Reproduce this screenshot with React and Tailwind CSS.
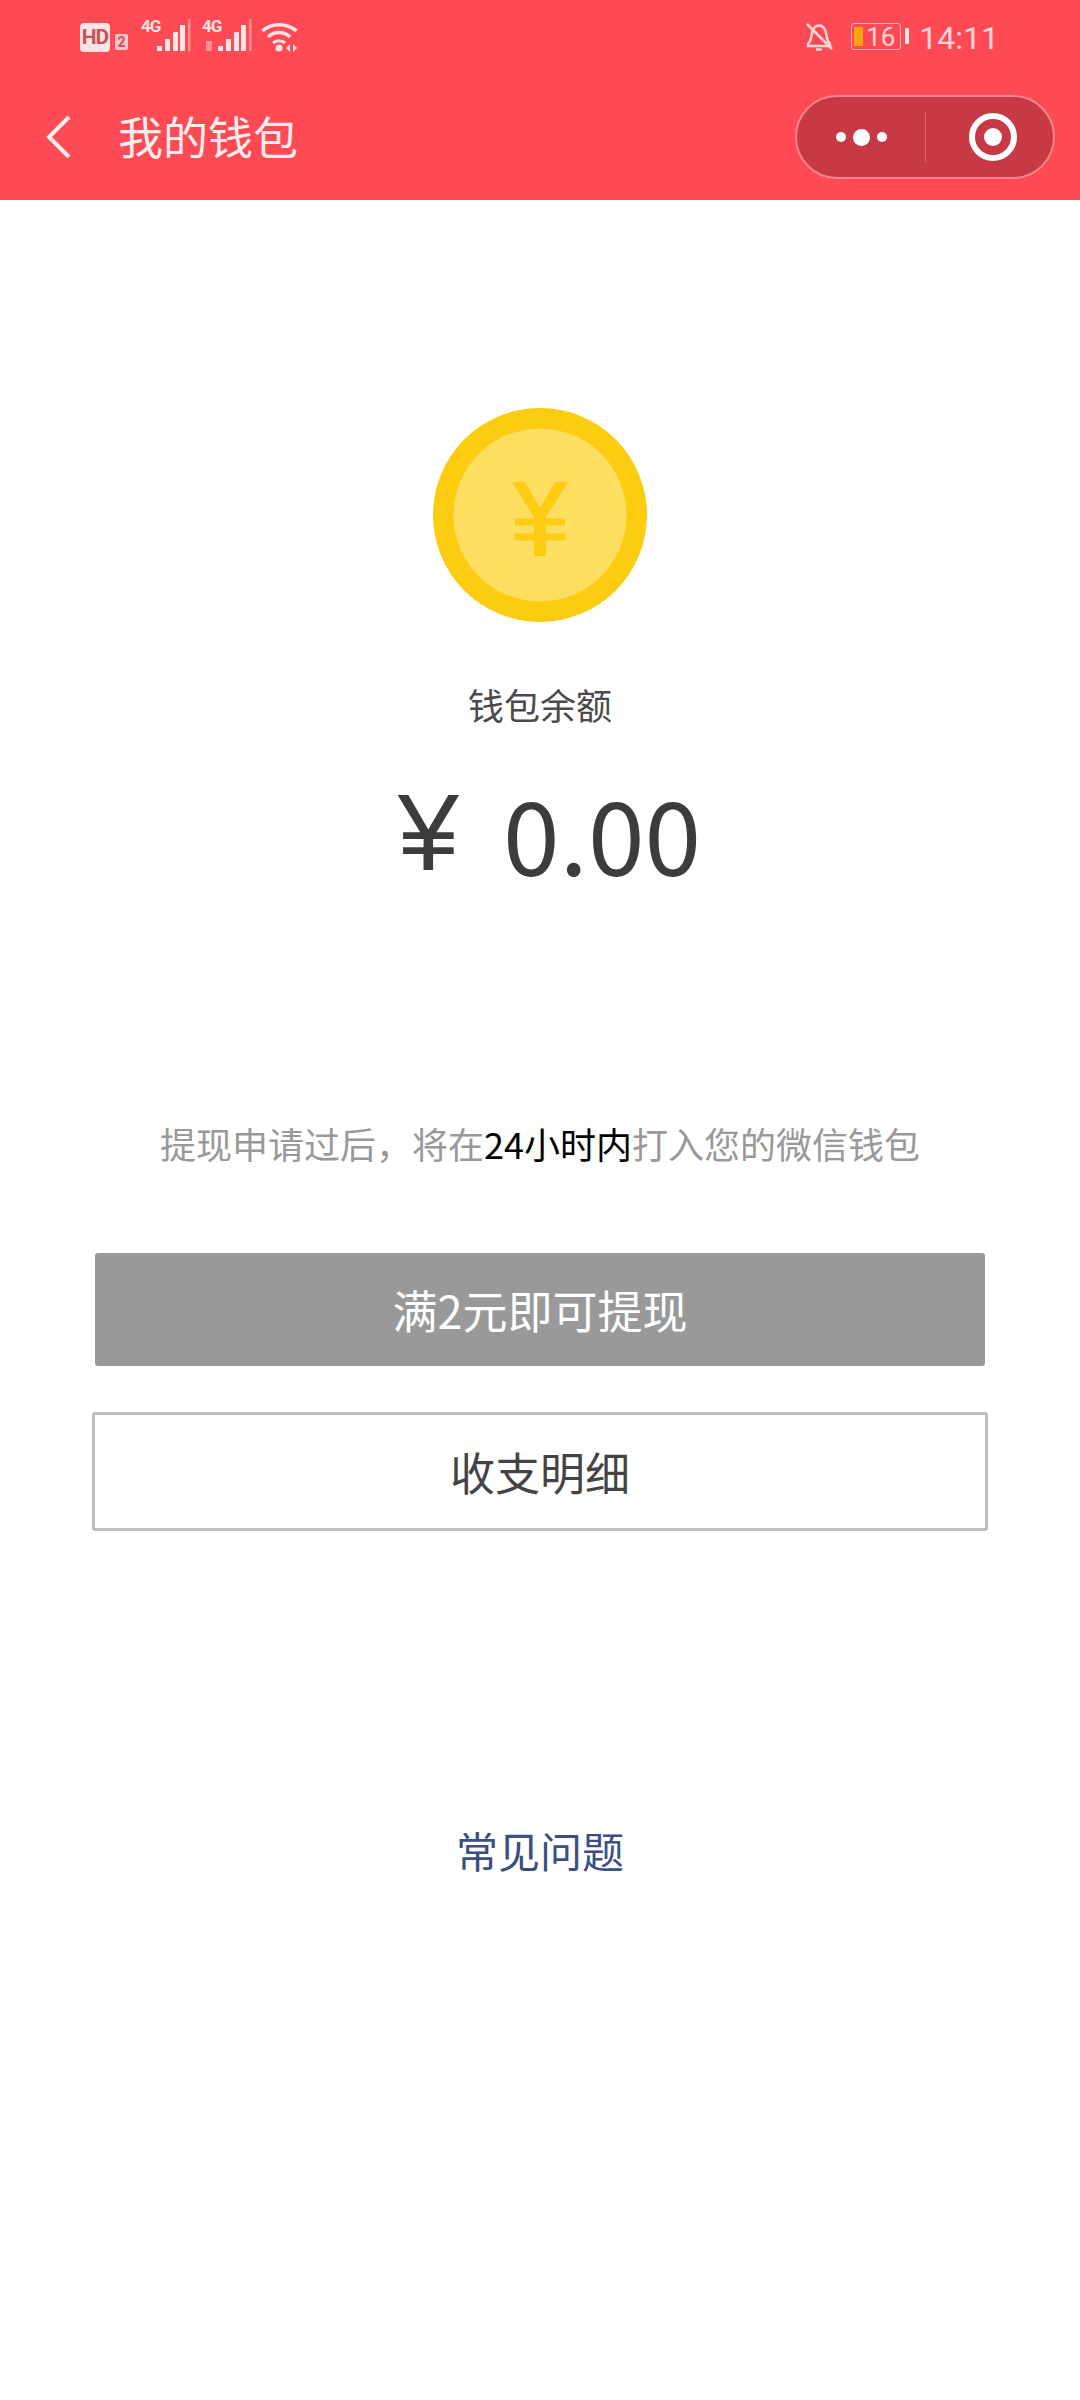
import React from "react";

const CJK = "font-['Noto_Sans_CJK_SC','Noto_Sans',sans-serif]";

function Signal({ sub }) {
  return (
    <div className="flex items-start">
      <div className="w-[16px] flex flex-col">
        <span className="text-[17px] leading-[15px] font-bold tracking-[-1px] whitespace-nowrap text-[#fde4e4] font-['Roboto',sans-serif]">
          4G
        </span>
        {sub && <div className="mt-[7px] ml-[4px] w-[6px] h-[10px] bg-[#fb8f95]" />}
      </div>
      <svg width="36" height="34" viewBox="16 0 36 34" className="block">
        <rect x="16" y="27" width="5" height="5" fill="#fde4e4" />
        <rect x="24" y="20" width="5" height="12" fill="#fde4e4" />
        <rect x="32" y="13" width="5" height="19" fill="#fde4e4" />
        <rect x="39" y="6" width="5" height="26" fill="#fde4e4" />
        <rect x="47" y="0" width="2.500" height="32" fill="#fb8a90" />
      </svg>
    </div>
  );
}

function Wifi() {
  return (
    <svg width="37" height="30" viewBox="0 0 37 30" fill="none" className="block">
      <path d="M1.500 9C10 0.500 26 0.500 35.500 9" stroke="#fde4e4" strokeWidth="3.500" />
      <path d="M7 15C13 9 23 9 29 15" stroke="#fde4e4" strokeWidth="3.500" />
      <path d="M12 21C15.500 18 20.500 18 24 21" stroke="#fde4e4" strokeWidth="3" />
      <circle cx="18" cy="26" r="3.500" fill="#fde4e4" />
      <path d="M29 22V30L25 26Z M32 22V30L36 26Z" fill="#fde4e4" />
    </svg>
  );
}

function BellOff() {
  return (
    <svg width="28" height="30" viewBox="0 0 28 30" fill="none" stroke="#fbd5d6" strokeWidth="2.500" className="block">
      <path d="M3 22C6 19 6 16 7 11C8 6 11 3.500 14 3.500C17 3.500 20 6 21 11C22 16 22 19 25 22V24H3Z" />
      <path d="M11 27.500H17" />
      <path d="M2 2L27 27" />
    </svg>
  );
}

export default function App() {
  return (
    <div className={`${CJK} w-[1080px] h-[2400px] bg-white flex flex-col items-center`}>
      <header className="w-full h-[200px] bg-[#fe4a55] flex flex-col shrink-0">
        {/* status bar */}
        <div className="h-[95px] flex justify-between pt-[19px] pl-[80px] pr-[81px]">
          <div className="flex items-start">
            <div className="mt-[4px] w-[30px] h-[29px] rounded-[4px] bg-[#fde4e4] flex items-center justify-center text-[21px] leading-none font-bold tracking-[-1px] text-[#c9505b] font-['Roboto',sans-serif]">
              HD
            </div>
            <div className="ml-[5px] mt-[15px] w-[13px] h-[16px] rounded-[2px] bg-[#fbc4c6] flex items-center justify-center text-[14px] leading-none font-bold text-[#c9505b] font-['Roboto',sans-serif]">
              2
            </div>
            <div className="ml-[13px] flex items-start gap-[9px]">
              <Signal />
              <Signal sub />
            </div>
            <div className="ml-[7px] mt-[3px]">
              <Wifi />
            </div>
          </div>
          <div className="flex items-start">
            <div className="mt-[3px]">
              <BellOff />
            </div>
            <div className="ml-[18px] mt-[4px] w-[50px] h-[27px] rounded-[3px] border border-[#fbb0b3] relative flex items-center justify-center text-[26px] leading-none text-[#fbd5d6] font-['Roboto',sans-serif]">
              <div className="absolute left-[2px] top-[3px] w-[9px] h-[19px] bg-[#f9a313]" />
              <span className="relative pl-[9px]">16</span>
            </div>
            <div className="ml-[4px] mt-[9px] w-[4px] h-[16px] rounded-[1px] bg-[#fde4e4]" />
            <div className="ml-[10px] mt-[2px] text-[32px] leading-[34px] text-[#fbd5d6] font-['Roboto',sans-serif]">
              14:11
            </div>
          </div>
        </div>
        {/* nav row */}
        <div className="flex items-center justify-between pl-[45px] pr-[25px]">
          <div className="flex items-center">
            <svg width="26" height="44" viewBox="0 0 26 44" fill="none" stroke="#fdeeee" strokeWidth="4" className="block">
              <path d="M24 2L4 22L24 42" />
            </svg>
            <span className="ml-[47px] mb-[2px] text-[45px] leading-[82px] text-[#fdeeee]">我的钱包</span>
          </div>
          <div className="w-[260px] h-[84px] rounded-full bg-[#c73a45] border-2 border-[#f8858b] flex items-center">
            <div className="w-[128px] flex items-center justify-center gap-[7px]">
              <span className="w-[10px] h-[10px] rounded-full bg-white" />
              <span className="w-[17px] h-[17px] rounded-full bg-white" />
              <span className="w-[10px] h-[10px] rounded-full bg-white" />
            </div>
            <div className="w-px h-[50px] bg-[#e0666d]" />
            <div className="flex-1 flex items-center justify-center pl-[7px]">
              <div className="w-[48px] h-[48px] rounded-full border-[6px] border-white flex items-center justify-center">
                <div className="w-[18px] h-[18px] rounded-full bg-white" />
              </div>
            </div>
          </div>
        </div>
      </header>

      {/* coin */}
      <svg width="216" height="216" viewBox="0 0 216 216" className="mt-[207px] block shrink-0">
        <circle cx="108" cy="108" r="107" fill="#fccc12" />
        <circle cx="108" cy="108" r="86.500" fill="#fede60" />
        <path d="M80 75H93L108 101L123 75H136L114 110V149H102V110Z" fill="#fccc12" />
        <path d="M83 115H133M83 130H133" fill="none" stroke="#fccc12" strokeWidth="7" />
      </svg>

      <div className="mt-[56px] text-[36px] leading-[50px] text-[#4a4a4a]">钱包余额</div>
      <div className="mt-[38px] pl-[19px] flex items-center text-[102px] leading-[130px] text-[#3c3c3c]">
        <span className="font-['Liberation_Sans',sans-serif] text-[110px] mr-[44px]">¥</span>
        <span>0.00</span>
      </div>

      <div className="mt-[221px] text-[36px] leading-[50px] text-[#999999]">
        提现申请过后，将在<span className="text-black">24小时内</span>打入您的微信钱包
      </div>

      <div className="mt-[85px] w-[890px] h-[113px] rounded-[3px] bg-[#999999] flex items-center justify-center text-[45px] text-white">
        满2元即可提现
      </div>
      <div className="mt-[46px] w-[896px] h-[119px] rounded-[3px] border-[3px] border-[#bdbdbd] flex items-center justify-center text-[45px] text-[#444444]">
        收支明细
      </div>

      <div className="mt-[289px] text-[42px] leading-[60px] text-[#3b4f80]">常见问题</div>
    </div>
  );
}
